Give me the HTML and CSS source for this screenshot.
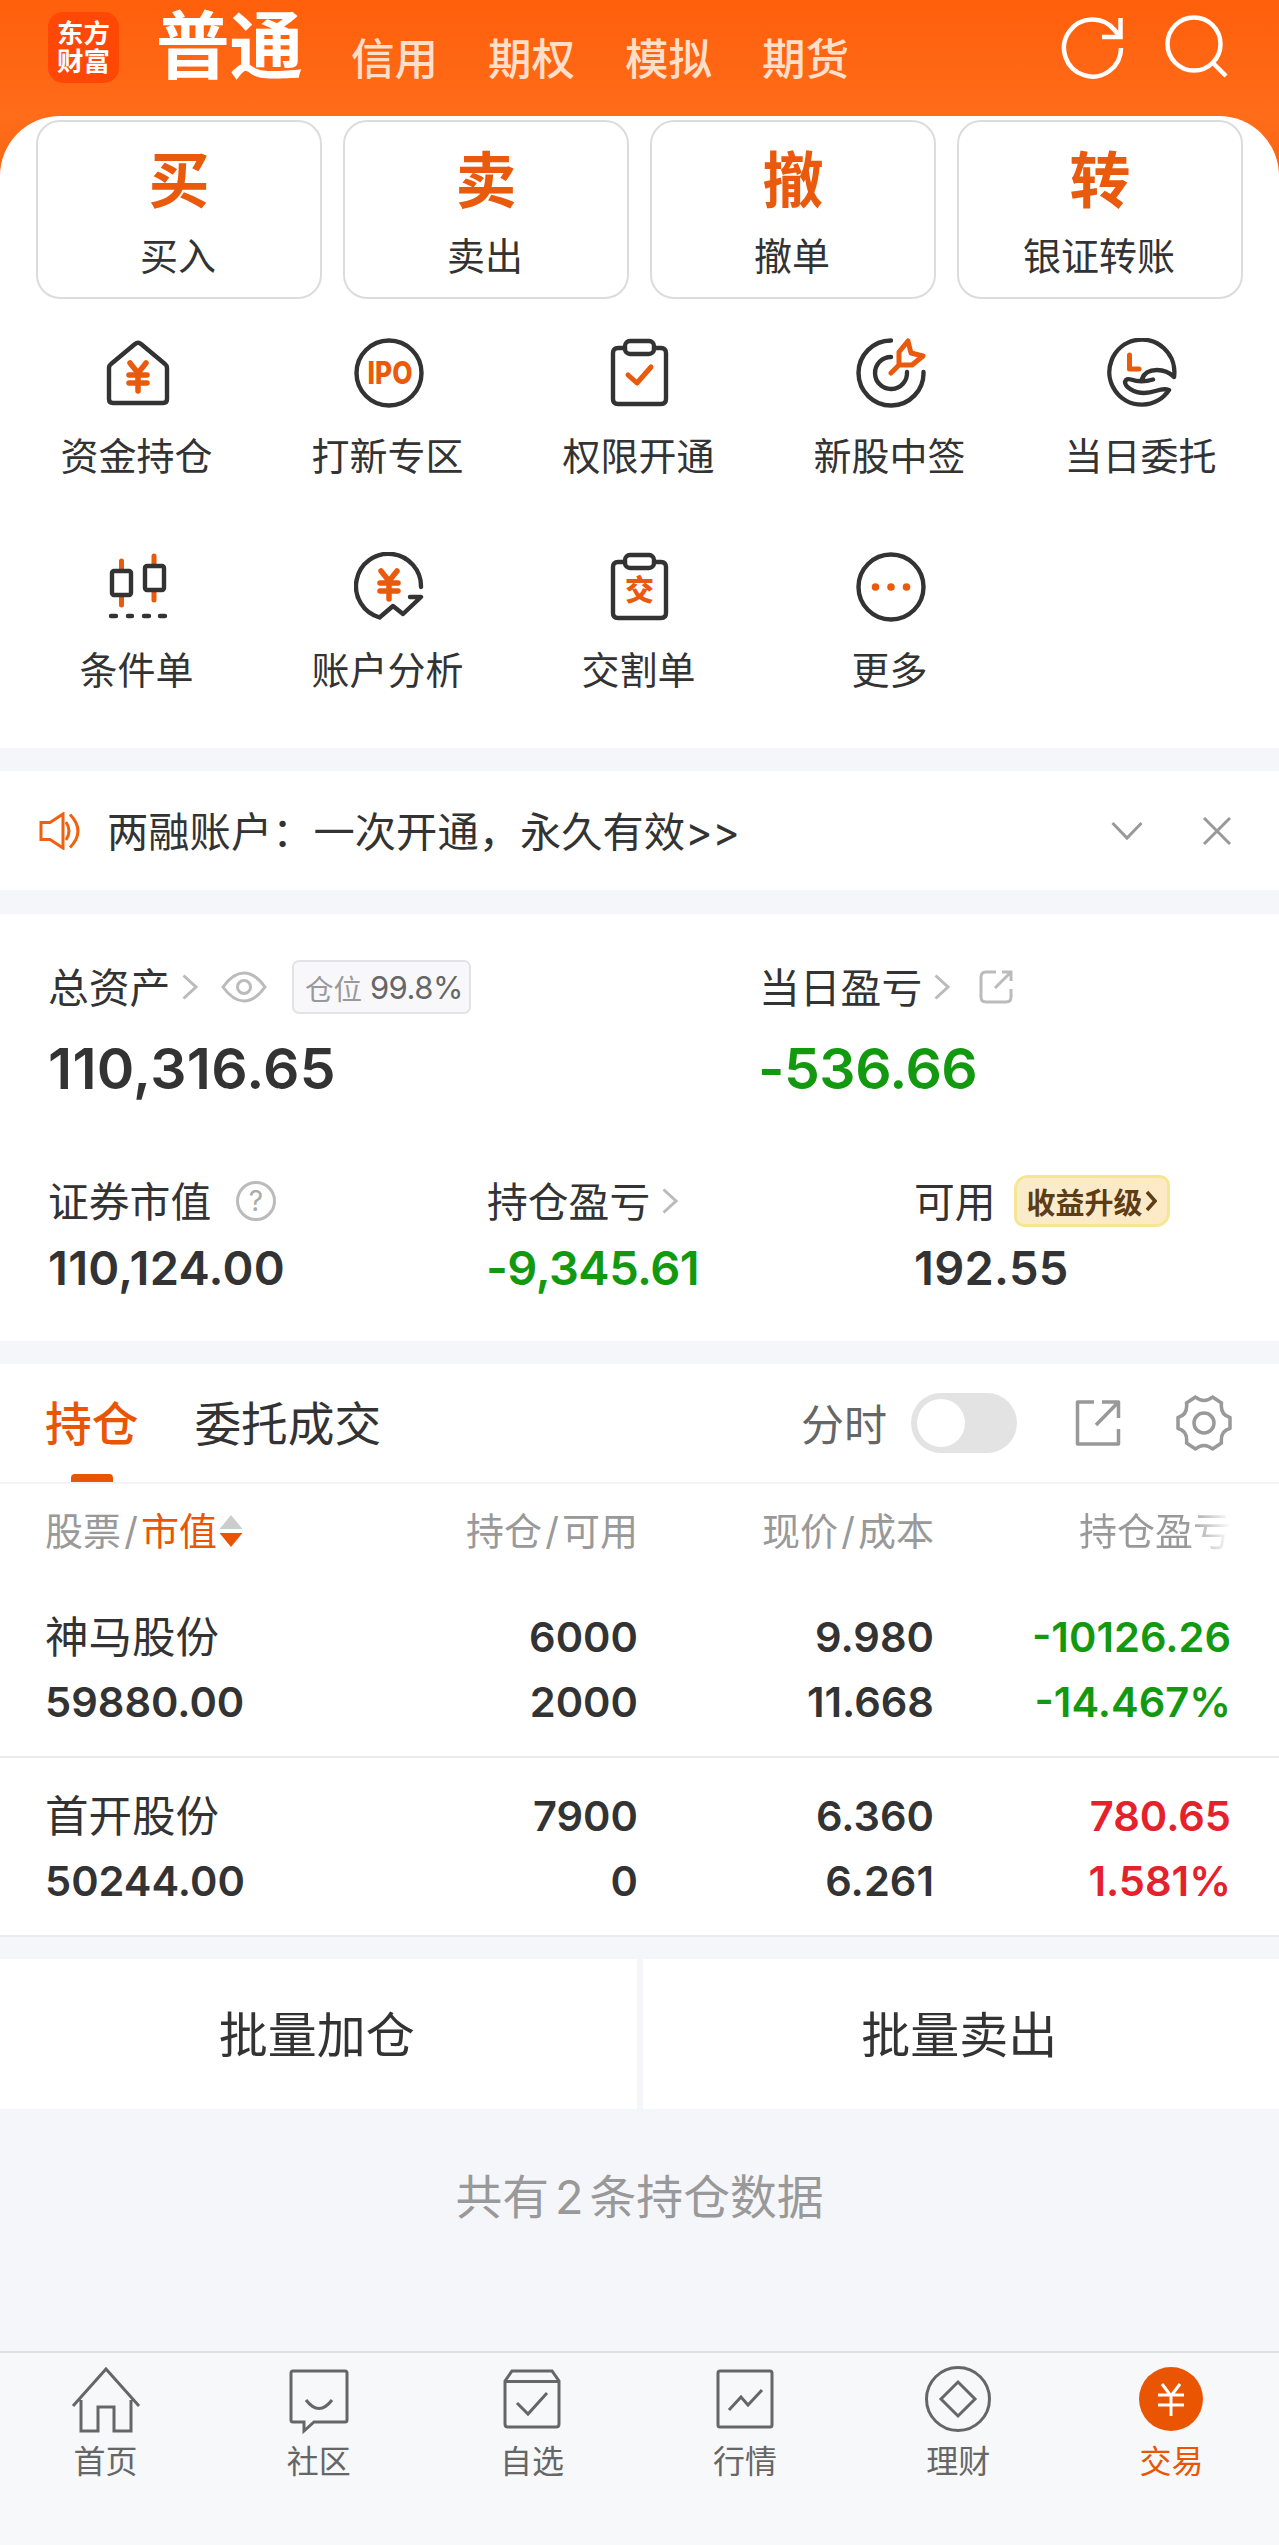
FILE: index.html
```html
<!DOCTYPE html>
<html lang="zh-CN">
<head>
    <meta charset="UTF-8">
    <meta name="viewport" content="width=device-width, initial-scale=1.0">
    <title>东方财富 - 交易</title>
    <link rel="stylesheet" href="styles.css">
</head>
<body>
    <header class="header">
        <div class="logo"><span>东方</span><span>财富</span></div>
        <nav class="accounts">
            <a class="active">普通</a>
            <a>信用</a>
            <a>期权</a>
            <a>模拟</a>
            <a>期货</a>
        </nav>
        <div class="header-icons">
            <svg width="64" height="64" viewBox="0 0 64 64" fill="none" stroke="#fff" stroke-width="4.5">
                <path d="M60 33A28.5 28.5 0 1 1 54 15.500L59 22"/>
                <path d="M59.5 3V22H41"/>
            </svg>
            <svg width="64" height="64" viewBox="0 0 64 64" fill="none" stroke="#fff" stroke-width="4.5">
                <circle cx="29" cy="29" r="26.5"/>
                <path d="M48 48L61 61"/>
            </svg>
        </div>
    </header>

    <main>
        <section class="panel">
            <div class="cards">
                <div class="card"><b>买</b><span>买入</span></div>
                <div class="card"><b>卖</b><span>卖出</span></div>
                <div class="card"><b>撤</b><span>撤单</span></div>
                <div class="card"><b>转</b><span>银证转账</span></div>
            </div>
            <div class="menu">
                <div class="item">
                    <svg class="icon" viewBox="0 0 70 70">
                        <path d="M32 6Q35 3.500 38 6L62 26Q64 27.500 64 30V61Q64 65 60 65H10Q6 65 6 61V30Q6 27.500 8 26Z"/>
                        <path class="yen" d="M27 25L35 35L43 25M26 37H44M26 45H44M35 35V53"/>
                    </svg>
                    <span>资金持仓</span>
                </div>
                <div class="item">
                    <svg class="icon" viewBox="0 0 70 70">
                        <circle cx="35" cy="35" r="32.5"/>
                        <text class="ipo" x="36" y="46" textLength="45" lengthAdjust="spacingAndGlyphs">IPO</text>
                    </svg>
                    <span>打新专区</span>
                </div>
                <div class="item">
                    <svg class="icon" viewBox="0 0 70 70">
                        <path d="M20 10H13Q8 10 8 15V61Q8 66 13 66H56Q61 66 61 61V15Q61 10 56 10H49"/>
                        <rect x="20" y="3" width="29" height="13" rx="5"/>
                        <path class="orange" d="M23 37L32 45L46 29"/>
                    </svg>
                    <span>权限开通</span>
                </div>
                <div class="item">
                    <svg class="icon" viewBox="0 0 70 70">
                        <path d="M35 2.5A32.5 32.5 0 1 0 67.500 34"/>
                        <path d="M35 19A16 16 0 1 0 51 34"/>
                        <path class="orange" d="M35 35L43 27V14L52 3L55 15L67 18L56 27H43"/>
                    </svg>
                    <span>新股中签</span>
                </div>
                <div class="item">
                    <svg class="icon" viewBox="0 0 70 70">
                        <path d="M67 39A32.5 32.500 0 1 0 62 52C53 49 49 55 37 55C27 55 18 49 18 44Q19 40 24 41.500Q34 45 46 41.500M35 41Q38 32 50 32Q60 32 67 39"/>
                        <path class="orange" d="M22.5 17V31H32"/>
                    </svg>
                    <span>当日委托</span>
                </div>
                <div class="item">
                    <svg class="icon" viewBox="0 0 70 70">
                        <path class="orange" d="M18.5 9V17M18.5 44V53M51 4V12M51 40V48"/>
                        <rect x="9" y="19" width="19" height="24" rx="2"/>
                        <rect x="42" y="14" width="19" height="24" rx="2"/>
                        <path d="M8 64H13M25 64H29M41 64H46M57 64H62"/>
                    </svg>
                    <span>条件单</span>
                </div>
                <div class="item">
                    <svg class="icon" viewBox="0 0 70 70">
                        <path d="M67 35A32.5 32.5 0 1 0 25.5 65.500L39 54L49 62L67 45H56"/>
                        <path class="yen" d="M27 19L35 29L43 19M26 31H44M26 39H44M35 29V47"/>
                    </svg>
                    <span>账户分析</span>
                </div>
                <div class="item">
                    <svg class="icon" viewBox="0 0 70 70">
                        <path d="M20 10H13Q8 10 8 15V61Q8 66 13 66H56Q61 66 61 61V15Q61 10 56 10H49"/>
                        <rect x="20" y="3" width="29" height="13" rx="5"/>
                        <text class="jiao" x="34.5" y="49">交</text>
                    </svg>
                    <span>交割单</span>
                </div>
                <div class="item">
                    <svg class="icon" viewBox="0 0 70 70">
                        <circle cx="35" cy="35" r="32.5"/>
                        <g class="dots"><circle cx="19.5" cy="35" r="3.800"/><circle cx="35" cy="35" r="3.8"/><circle cx="50.5" cy="35" r="3.8"/></g>
                    </svg>
                    <span>更多</span>
                </div>
            </div>
        </section>

        <section class="notice">
            <svg width="42" height="38" viewBox="0 0 42 38" fill="none" stroke="#f0600f" stroke-width="3">
                <path d="M2 10.5H11L24 2V36L11 27.5H2Z"/>
                <path d="M27 10Q33 19 27 28M31 2.5Q47 19 31 35.5"/>
            </svg>
            <p>两融账户：一次开通，永久有效&gt;&gt;</p>
            <svg class="down" width="32" height="20" viewBox="0 0 32 20" fill="none" stroke="#999" stroke-width="3"><path d="M1.5 2L16 17L30.5 2"/></svg>
            <svg width="28" height="28" viewBox="0 0 28 28" fill="none" stroke="#999" stroke-width="3"><path d="M1 1L27 27M27 1L1 27"/></svg>
        </section>

        <section class="assets">
            <div class="total">
                <div>
                    <div class="name"><span>总资产</span>
                        <svg class="arrow" viewBox="0 0 16 26"><path d="M1.5 1.5L14 13L1.5 24.5"/></svg>
                        <svg class="eye" width="46" height="32" viewBox="0 0 46 32"><path d="M2 16Q12 2 23 2T44 16Q34 30 23 30T2 16Z"/><circle cx="23" cy="16" r="6.5"/></svg>
                        <span class="position">仓位 <em>99.8%</em></span>
                    </div>
                    <div class="big num">110,316.65</div>
                </div>
                <div>
                    <div class="name"><span>当日盈亏</span>
                        <svg class="arrow" viewBox="0 0 16 26"><path d="M1.5 1.5L14 13L1.5 24.5"/></svg>
                        <svg class="share" width="34" height="34" viewBox="0 0 34 34"><path d="M17 2H7Q2 2 2 7V27Q2 32 7 32H27Q32 32 32 27V19M23 2H32V11M32 2L16 18"/></svg>
                    </div>
                    <div class="big num green">-536.66</div>
                </div>
            </div>
            <div class="detail">
                <div>
                    <div class="name"><span>证券市值</span>
                        <svg class="help" width="40" height="40" viewBox="0 0 40 40"><circle cx="20" cy="20" r="18.5"/><text x="20" y="29.5">?</text></svg>
                    </div>
                    <div class="mid num">110,124.00</div>
                </div>
                <div>
                    <div class="name"><span>持仓盈亏</span>
                        <svg class="arrow" viewBox="0 0 16 26"><path d="M1.5 1.5L14 13L1.5 24.5"/></svg>
                    </div>
                    <div class="mid num green">-9,345.61</div>
                </div>
                <div>
                    <div class="name"><span>可用</span>
                        <span class="upgrade">收益升级<svg width="12" height="22" viewBox="0 0 12 22" fill="none" stroke="#5c3d16" stroke-width="3.5"><path d="M2 2L10 11L2 20"/></svg></span>
                    </div>
                    <div class="mid num">192.55</div>
                </div>
            </div>
        </section>

        <section class="holdings">
            <div class="tabs">
                <a class="tab active">持仓</a>
                <a class="tab">委托成交</a>
                <span class="minute">分时</span>
                <i class="switch"></i>
                <svg class="export" width="46" height="46" viewBox="0 0 46 46"><path d="M19 2H2.5V44H43.5V29M27 2H43.5V18M43.5 2L21 25"/></svg>
                <svg class="gear" width="56" height="56" viewBox="0 0 56 56">
                    <path d="M19.5 2Q28 9 36.5 2L45.5 8Q44 20 54 22.5V33.5Q44 36 45.5 48L36.5 54Q28 47 19.5 54L10.5 48Q12 36 2 33.5V22.5Q12 20 10.5 8Z"/>
                    <circle cx="28" cy="28" r="10"/>
                </svg>
            </div>
            <div class="row titles">
                <span>股票<i class="slash">/</i><span class="sort">市值</span><svg width="24" height="34" viewBox="0 0 24 34"><path fill="#ccc" d="M12 1L23.5 15H.5Z"/><path fill="#ea5504" d="M12 33L23.5 19H.5Z"/></svg></span>
                <span>持仓<i class="slash">/</i>可用</span>
                <span>现价<i class="slash">/</i>成本</span>
                <span class="fade">持仓盈亏</span>
            </div>
            <div class="row stock">
                <div><span class="cn">神马股份</span><span>59880.00</span></div>
                <div><span>6000</span><span>2000</span></div>
                <div><span>9.980</span><span>11.668</span></div>
                <div class="green"><span>-10126.26</span><span>-14.467%</span></div>
            </div>
            <div class="row stock">
                <div><span class="cn">首开股份</span><span>50244.00</span></div>
                <div><span>7900</span><span>0</span></div>
                <div><span>6.360</span><span>6.261</span></div>
                <div class="red"><span>780.65</span><span>1.581%</span></div>
            </div>
        </section>

        <div class="batch">
            <button>批量加仓</button>
            <button>批量卖出</button>
        </div>
        <p class="count">共有<span>2</span>条持仓数据</p>
    </main>

    <footer class="tabbar">
        <a>
            <svg viewBox="0 0 68 68"><path d="M1 41L34 4L67 41M9 35V66H26V42H42V66H59V35"/></svg>
            首页
        </a>
        <a>
            <svg viewBox="0 0 68 68"><path d="M8 6H60Q62 6 62 8V55Q62 57 60 57H29L19 66V57H8Q6 57 6 55V8Q6 6 8 6Z"/><path d="M21 35Q34 52 47 35"/></svg>
            社区
        </a>
        <a>
            <svg viewBox="0 0 68 68"><path d="M7 16L14 6H54L61 16V59Q61 62 58 62H10Q7 62 7 59ZM7 16.5H61M19 38L30 49L49 28"/></svg>
            自选
        </a>
        <a>
            <svg viewBox="0 0 68 68"><rect x="7" y="6" width="54" height="56" rx="2"/><path d="M18 45L30 32L37 40L51 25"/></svg>
            行情
        </a>
        <a>
            <svg viewBox="0 0 68 68"><circle cx="34" cy="34" r="31.5"/><path d="M34 17L51 34L34 51L17 34Z"/></svg>
            理财
        </a>
        <a class="active">
            <svg viewBox="0 0 68 68"><circle class="fill" cx="34" cy="34" r="32"/><path class="white" d="M25 19L34 31L43 19M21 30H47M21 40H47M34 31V51"/></svg>
            交易
        </a>
    </footer>
</body>
</html>
```
FILE: styles.css
```css
* {
    box-sizing: border-box;
    margin: 0;
    padding: 0;
}
body {
    width: 1279px;
    height: 2545px;
    display: flex;
    flex-direction: column;
    background: #f5f6f9;
    color: #333;
    font-family: Inter, "Noto Sans CJK SC", sans-serif;
    font-size: 38px;
    overflow: hidden;
}
svg {
    flex: none;
}
i, em {
    font-style: normal;
}
.header {
    height: 186px;
    padding: 0 50px 0 48px;
    display: flex;
    align-items: flex-start;
    background: linear-gradient(#ff5f0b, #ff6c1a 116px, #f96411);
}
.logo {
    width: 71px;
    height: 71px;
    margin-top: 12px;
    padding-top: 7px;
    border-radius: 15px;
    background: #ff4805;
    color: #fff;
    font-size: 26.5px;
    font-weight: 700;
    line-height: 28px;
    text-align: center;
}
.logo span {
    display: block;
}
.accounts {
    display: flex;
    align-items: flex-start;
    margin-left: 37px;
    color: #ffdfc9;
    font-size: 43.5px;
    font-weight: 500;
    line-height: 60px;
}
.accounts a {
    width: 137px;
    padding-top: 29px;
}
.accounts .active {
    width: 195px;
    padding-top: 0;
    color: #fff;
    font-size: 73.5px;
    font-weight: 700;
    line-height: 94px;
}
.header-icons {
    display: flex;
    gap: 40px;
    margin: 15px 0 0 auto;
}
.panel {
    height: 632px;
    margin-top: -70px;
    padding: 4px 12px 0;
    border-radius: 60px 60px 0 0;
    background: #fff;
}
.cards {
    display: grid;
    grid-template-columns: repeat(4, 286px);
    gap: 21px;
    padding: 0 24px;
}
.card {
    height: 179px;
    padding-top: 19px;
    display: flex;
    flex-direction: column;
    align-items: center;
    border: 2px solid #dcdcdc;
    border-radius: 24px;
}
.card b {
    color: #ea5a0c;
    font-size: 61px;
    font-weight: 700;
    line-height: 80px;
}
.card span {
    margin-top: 10px;
    line-height: 50px;
}
.card span, .item span {
    margin-left: -2px;
}
.menu {
    display: grid;
    grid-template-columns: repeat(5, 251px);
    grid-auto-rows: 214px;
    padding-top: 39px;
}
.item {
    display: flex;
    flex-direction: column;
    align-items: center;
    line-height: 50px;
}
.icon {
    width: 70px;
    height: 70px;
    margin-bottom: 23px;
    fill: none;
    stroke: #333;
    stroke-width: 4.4;
    stroke-linecap: round;
    stroke-linejoin: round;
}
.icon .orange {
    stroke: #ea5a0c;
    stroke-width: 5;
}
.icon .yen {
    stroke: #ea5a0c;
    stroke-width: 5.5;
}
.icon text, .icon .dots {
    fill: #ea5a0c;
    stroke: none;
    text-anchor: middle;
}
.ipo {
    font-size: 31px;
    font-weight: 800;
}
.jiao {
    font-size: 29px;
    font-weight: 900;
}
.notice {
    height: 119px;
    margin-top: 23px;
    padding: 0 48px 0 39px;
    display: flex;
    align-items: center;
    background: #fff;
    font-size: 41.3px;
}
.notice p {
    flex: 1;
    margin: -3px 0 0 26px;
}
.notice .down {
    margin-right: 60px;
}
.assets {
    height: 427px;
    margin-top: 24px;
    padding: 43px 48px 0;
    background: #fff;
}
.total {
    height: 214px;
    display: grid;
    grid-template-columns: 711px 1fr;
}
.detail {
    display: grid;
    grid-template-columns: 439px 427px 1fr;
}
.name {
    height: 60px;
    display: flex;
    align-items: center;
    font-size: 40.8px;
}
.name > :first-child {
    margin-top: -4px;
}
.num {
    font-weight: 600;
    letter-spacing: .3px;
}
.num.green {
    margin-left: -1px;
    letter-spacing: -.5px;
}
.big {
    margin-top: 17px;
    font-size: 57px;
    line-height: 70px;
}
.mid {
    margin-top: 8px;
    font-size: 47px;
    line-height: 58px;
}
.green {
    color: #12990f;
}
.red {
    color: #e5212c;
}
.arrow {
    width: 16px;
    height: 26px;
    margin-left: 12px;
}
.arrow, .eye, .share, .help {
    fill: none;
    stroke: #bbb;
    stroke-width: 3;
}
.eye {
    margin-left: 23px;
}
.share {
    margin-left: 29px;
}
.help {
    margin-left: 25px;
}
.help text {
    fill: #aaa;
    stroke: none;
    font-size: 28px;
    text-anchor: middle;
}
.position {
    width: 179px;
    height: 54px;
    margin-left: 25px;
    padding-left: 4px;
    display: flex;
    align-items: center;
    justify-content: center;
    gap: 8px;
    border: 2px solid #e2e2e8;
    border-radius: 7px;
    background: #f8f8fb;
    color: #999;
    font-size: 28.5px;
}
.position em {
    color: #666;
    font-size: 31px;
    letter-spacing: -.5px;
}
.upgrade {
    width: 156px;
    height: 52px;
    margin-left: 18px;
    display: flex;
    align-items: center;
    justify-content: center;
    border: 3px solid #f7e691;
    border-radius: 14px 10px 14px 10px;
    background: linear-gradient(90deg, #f9eccb, #fde9c5);
    color: #5c3d16;
    font-size: 29px;
    font-weight: 700;
}
.upgrade svg {
    margin-left: 2px;
}
.holdings {
    margin-top: 23px;
    background: #fff;
}
.tabs {
    height: 120px;
    padding: 0 47px 0 45px;
    display: flex;
    align-items: center;
    border-bottom: 2px solid #f4f4f6;
    font-size: 46.7px;
}
.tab {
    height: 118px;
    margin-right: 56px;
    line-height: 120px;
}
.tab.active {
    color: #ea5504;
    font-weight: 500;
}
.tab.active::after {
    content: "";
    display: block;
    width: 42px;
    height: 8px;
    margin: -10px auto 0;
    border-radius: 4px 4px 0 0;
    background: #ea5504;
}
.minute {
    margin: -2px 0 0 auto;
    color: #666;
    font-size: 43px;
}
.switch {
    width: 106px;
    height: 60px;
    margin: 0 58px 0 24px;
    padding: 6px;
    border-radius: 30px;
    background: #e3e3e3;
}
.switch::before {
    content: "";
    display: block;
    width: 48px;
    height: 48px;
    border-radius: 50%;
    background: #fff;
}
.export, .gear {
    fill: none;
    stroke: #999;
    stroke-width: 3.5;
    stroke-linejoin: round;
}
.gear {
    margin-left: 55px;
}
.row {
    display: grid;
    grid-template-columns: 300px 293px 296px 1fr;
    padding: 0 48px 0 45px;
    text-align: right;
}
.row > :first-child {
    text-align: left;
}
.titles {
    height: 95px;
    line-height: 95px;
    color: #999;
}
.titles svg {
    margin-left: 2px;
    vertical-align: -3px;
}
.slash {
    display: inline-block;
    width: 20px;
    text-align: center;
}
.sort {
    color: #ea5504;
}
.fade {
    color: transparent;
    background: linear-gradient(90deg, #999 85%, #fff 100%);
    background-clip: text;
    -webkit-background-clip: text;
}
.stock {
    height: 179px;
    padding-top: 26px;
    border-bottom: 2px solid #ebebed;
    font-size: 41.6px;
    font-weight: 600;
}
.stock span {
    display: block;
    height: 65px;
    line-height: 65px;
}
.stock .cn {
    font-size: 43.5px;
    font-weight: 400;
}
.batch {
    display: grid;
    grid-template-columns: 1fr 1fr;
    gap: 6px;
    margin-top: 22px;
}
.batch button {
    height: 150px;
    padding: 0 3px 5px 0;
    border: 0;
    background: #fff;
    color: #333;
    font: inherit;
    font-size: 49px;
}
.count {
    padding-top: 54px;
    color: #999;
    font-size: 46.8px;
    line-height: 68px;
    text-align: center;
}
.count span {
    margin: 0 6px;
}
.tabbar {
    height: 194px;
    margin-top: auto;
    display: grid;
    grid-template-columns: repeat(6, 1fr);
    border-top: 2px solid #dfe0e3;
    background: #f7f8fa;
}
.tabbar a {
    display: flex;
    flex-direction: column;
    align-items: center;
    padding: 12px 2px 0 0;
    color: #666;
    font-size: 32px;
    line-height: 48px;
}
.tabbar svg {
    width: 68px;
    height: 68px;
    margin-bottom: 5px;
    overflow: visible;
    fill: none;
    stroke: #666;
    stroke-width: 3;
}
.tabbar .active {
    color: #ea5504;
}
.tabbar .fill {
    fill: #ea5504;
    stroke: none;
}
.tabbar .white {
    stroke: #fff;
}
```
